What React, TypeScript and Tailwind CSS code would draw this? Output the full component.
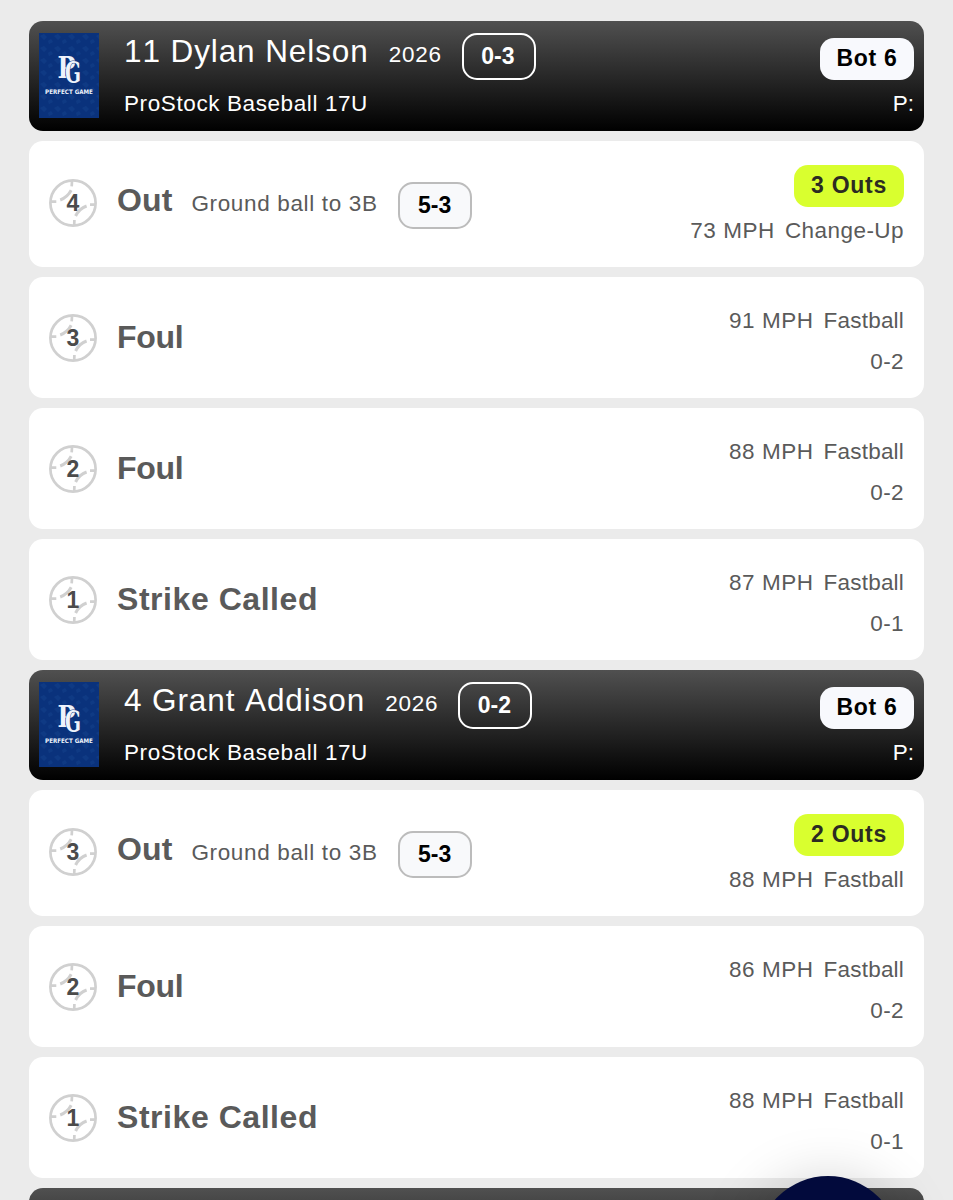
import React from "react";

type Pitch = {
  num: number;
  result: string;
  detail?: string;
  play?: string;
  outs?: string;
  speed: string;
  type: string;
  count?: string;
};

type AtBat = {
  player: string;
  year: string;
  score: string;
  team: string;
  inning: string;
  pitches: Pitch[];
};

const atBats: AtBat[] = [
  {
    player: "11 Dylan Nelson",
    year: "2026",
    score: "0-3",
    team: "ProStock Baseball 17U",
    inning: "Bot 6",
    pitches: [
      { num: 4, result: "Out", detail: "Ground ball to 3B", play: "5-3", outs: "3 Outs", speed: "73 MPH", type: "Change-Up" },
      { num: 3, result: "Foul", speed: "91 MPH", type: "Fastball", count: "0-2" },
      { num: 2, result: "Foul", speed: "88 MPH", type: "Fastball", count: "0-2" },
      { num: 1, result: "Strike Called", speed: "87 MPH", type: "Fastball", count: "0-1" },
    ],
  },
  {
    player: "4 Grant Addison",
    year: "2026",
    score: "0-2",
    team: "ProStock Baseball 17U",
    inning: "Bot 6",
    pitches: [
      { num: 3, result: "Out", detail: "Ground ball to 3B", play: "5-3", outs: "2 Outs", speed: "88 MPH", type: "Fastball" },
      { num: 2, result: "Foul", speed: "86 MPH", type: "Fastball", count: "0-2" },
      { num: 1, result: "Strike Called", speed: "88 MPH", type: "Fastball", count: "0-1" },
    ],
  },
];

const tracking: Record<string, string> = {
  Fastball: "tracking-[0.2px]",
  "Change-Up": "tracking-[0.45px]",
  Foul: "tracking-[-0.3px]",
  Out: "tracking-[0.1px]",
  "Strike Called": "tracking-[0.55px]",
};

const TeamLogo: React.FC = () => (
  <svg viewBox="0 0 60 85" className="w-[60px] h-[85px] shrink-0">
    <defs>
      <pattern id="camo" width="14" height="12" patternUnits="userSpaceOnUse">
        <path d="M1 3l4-2 3 3-3 3zM9 8l3-2 2 3-4 2z" fill="#0f3a84" />
      </pattern>
    </defs>
    <rect width="60" height="85" fill="#0a327c" />
    <rect width="60" height="85" fill="url(#camo)" />
    <g fill="#eef3fb" fontFamily="'DejaVu Serif Condensed', 'DejaVu Serif', serif" fontWeight="700">
      <text x="18.5" y="44.5" fontSize="29" textLength="18" lengthAdjust="spacingAndGlyphs">P</text>
      <text x="26" y="50" fontSize="30" textLength="16" lengthAdjust="spacingAndGlyphs" stroke="#0a327c" strokeWidth="1.2" paintOrder="stroke">G</text>
    </g>
    <text x="30" y="61" textAnchor="middle" fontSize="6.2" fontWeight="700" fill="#eef3fb" fontFamily="'DejaVu Sans Condensed', 'DejaVu Sans', sans-serif">PERFECT GAME</text>
  </svg>
);

const PitchBall: React.FC<{ num: number }> = ({ num }) => (
  <div className="grid size-12 shrink-0 place-items-center">
    <svg viewBox="0 0 48 48" className="col-start-1 row-start-1 size-12" fill="none" stroke="#d0d0d0" strokeWidth="2.7">
      <circle cx="24" cy="24" r="22.6" />
      <path d="M23 2L22.7 7.3M2 22.7H7.3M41 25.6H46.5M25.4 41L25.2 46.5" />
      <path d="M11.2 21Q18.3 18.4 22.2 11.3M26.6 37Q30.2 29.6 37.6 27" strokeWidth="3" />
    </svg>
    <span className="col-start-1 row-start-1 text-[23px] leading-6 font-bold text-[#4b4b4b]">{num}</span>
  </div>
);

const BatterHeader: React.FC<{ atBat: AtBat }> = ({ atBat }) => (
  <div className="flex h-[110px] shrink-0 rounded-[14px] bg-linear-to-b/srgb from-[#505050] to-black px-2.5 pt-3 text-white">
    <TeamLogo />
    <div className="ml-[24px]">
      <div className="flex h-[47px] items-start">
        <span className="pl-px text-[31.5px] leading-9 tracking-[0.9px] [font-kerning:none]">{atBat.player}</span>
        <span className="ml-[20px] pt-2.5 text-[22.5px] leading-6 tracking-[0.8px]">{atBat.year}</span>
        <span className="ml-5 flex h-[47px] w-[74px] items-center justify-center rounded-[15px] border-[2.5px] border-white pr-0.5 text-[23px] font-bold">
          {atBat.score}
        </span>
      </div>
      <div className="mt-3 pl-px text-[22.5px] leading-6 tracking-[0.6px]">{atBat.team}</div>
    </div>
    <div className="ml-auto flex flex-col items-end pt-[5px]">
      <span className="flex h-[42px] w-[94px] items-center justify-center rounded-[14px] bg-[#f8f9fd] pb-0.5 text-[23px] font-bold tracking-[0.7px] text-black">
        {atBat.inning}
      </span>
      <span className="mt-3 text-[22.5px] leading-6">P:</span>
    </div>
  </div>
);

const PitchRow: React.FC<{ pitch: Pitch }> = ({ pitch }) => {
  const speed = (
    <div className="flex gap-2.5 text-[22.5px] leading-6">
      <span className="tracking-[0.55px]">{pitch.speed}</span>
      <span className={tracking[pitch.type]}>{pitch.type}</span>
    </div>
  );

  if (pitch.outs) {
    return (
      <div className="flex h-[126px] shrink-0 rounded-[14px] bg-white px-5 text-[#5a5a5a]">
        <div className="pt-[38px]">
          <PitchBall num={pitch.num} />
        </div>
        <span className={`ml-5 pt-[41px] text-[32px] leading-9 font-bold ${tracking[pitch.result]}`}>{pitch.result}</span>
        <span className="ml-[19px] pt-[51px] text-[22.5px] leading-6 tracking-[0.65px]">{pitch.detail}</span>
        <span className="mt-[41px] ml-5 flex h-[47px] w-[74px] items-center justify-center rounded-[15px] border-[2.5px] border-[#bcbcbc] bg-[#f8f9fb] text-[23px] font-bold text-black">
          {pitch.play}
        </span>
        <div className="ml-auto flex flex-col items-end pt-6">
          <span className="mb-3 flex h-[42px] w-[110px] items-center justify-center rounded-[14px] bg-[#d9ff2f] pb-0.5 text-[23px] font-bold tracking-[0.7px] text-[#2b2b22]">
            {pitch.outs}
          </span>
          {speed}
        </div>
      </div>
    );
  }

  return (
    <div className="flex h-[121px] shrink-0 rounded-[14px] bg-white px-5 text-[#5a5a5a]">
      <div className="pt-[37px]">
        <PitchBall num={pitch.num} />
      </div>
      <span className={`ml-5 pt-[42px] text-[32px] leading-9 font-bold ${tracking[pitch.result]}`}>{pitch.result}</span>
      <div className="ml-auto flex flex-col items-end gap-[17px] pt-8">
        {speed}
        <span className="text-[22.5px] leading-6 tracking-[0.4px]">{pitch.count}</span>
      </div>
    </div>
  );
};

export default function App() {
  return (
    <div className="relative h-[1200px] w-[953px] overflow-hidden bg-[#ebebeb] font-['Liberation_Sans',Arial,sans-serif]">
      <div className="flex flex-col gap-2.5 pt-[21px] pr-[29px] pl-[29px]">
        {atBats.map((atBat) => (
          <React.Fragment key={atBat.player}>
            <BatterHeader atBat={atBat} />
            {atBat.pitches.map((pitch) => (
              <PitchRow key={pitch.num} pitch={pitch} />
            ))}
          </React.Fragment>
        ))}
        {/* next batter, cut off by the fold */}
        <div className="h-[110px] shrink-0 rounded-[14px] bg-linear-to-b/srgb from-[#505050] to-black" />
      </div>

      {/* floating action button */}
      <button className="absolute top-[1176px] left-[757px] size-[142px] rounded-full bg-[#020a3c] shadow-[0_8px_60px_rgba(0,0,0,0.22)]" />
    </div>
  );
}
